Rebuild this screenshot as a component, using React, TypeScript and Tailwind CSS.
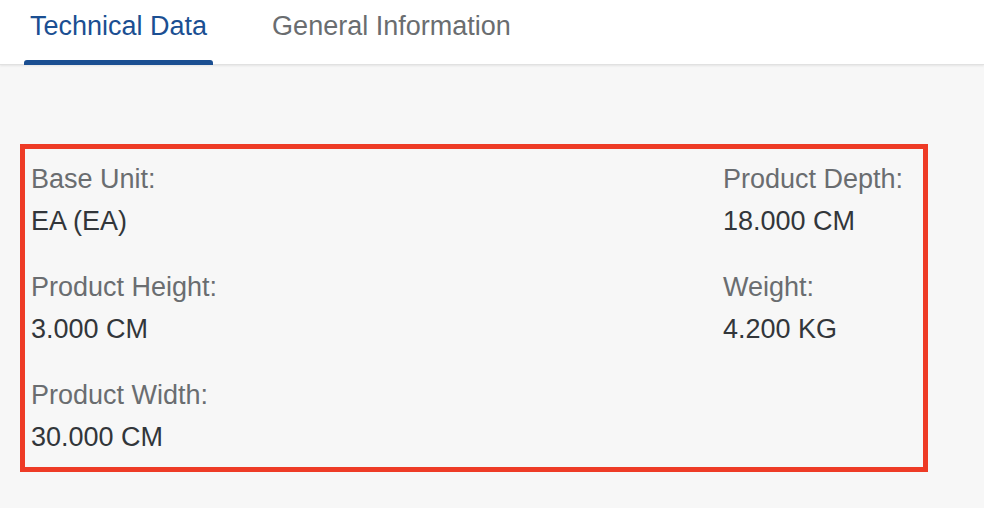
const font = { fontFamily: '"Liberation Sans", Arial, sans-serif' }

type Field = { label: string; value: string }

const leftFields: Field[] = [
  { label: 'Base Unit:', value: 'EA (EA)' },
  { label: 'Product Height:', value: '3.000 CM' },
  { label: 'Product Width:', value: '30.000 CM' },
]

const rightFields: Field[] = [
  { label: 'Product Depth:', value: '18.000 CM' },
  { label: 'Weight:', value: '4.200 KG' },
]

function FieldItem({ field }: { field: Field }) {
  return (
    <div className="flex flex-col text-[27px] leading-[42px]">
      <span className="text-[#6a6d70] whitespace-nowrap">{field.label}</span>
      <span className="text-[#32363a] whitespace-nowrap">{field.value}</span>
    </div>
  )
}

export default function App() {
  return (
    <div className="w-[984px] h-[508px] bg-[#f7f7f7] overflow-hidden" style={font}>
      {/* tab header */}
      <div className="h-[65px] bg-white border-b border-[#e1e1e1] shadow-[0_1px_2px_rgba(0,0,0,0.08)] flex items-stretch pl-[24px] gap-[53px]">
        <div className="relative px-[6px] flex items-start pt-[8px] text-[27px] leading-[36px] text-[#1b4f92]">
          Technical Data
          <span className="absolute left-0 right-0 bottom-[-1px] h-[5px] bg-[#1b4f92] rounded-t-[3px]" />
        </div>
        <div className="px-[6px] flex items-start pt-[8px] text-[27px] leading-[36px] text-[#6a6d70]">
          General Information
        </div>
      </div>

      {/* technical data form */}
      <div className="pt-[79px] pl-[20px]">
        <div className="w-[908px] h-[328px] border-[5px] border-[#ee3b26] flex pl-[6px] pt-[9px]">
          <div className="flex-1 flex flex-col gap-[24px]">
            {leftFields.map(f => <FieldItem key={f.label} field={f} />)}
          </div>
          <div className="w-[200px] flex flex-col gap-[24px]">
            {rightFields.map(f => <FieldItem key={f.label} field={f} />)}
          </div>
        </div>
      </div>
    </div>
  )
}
